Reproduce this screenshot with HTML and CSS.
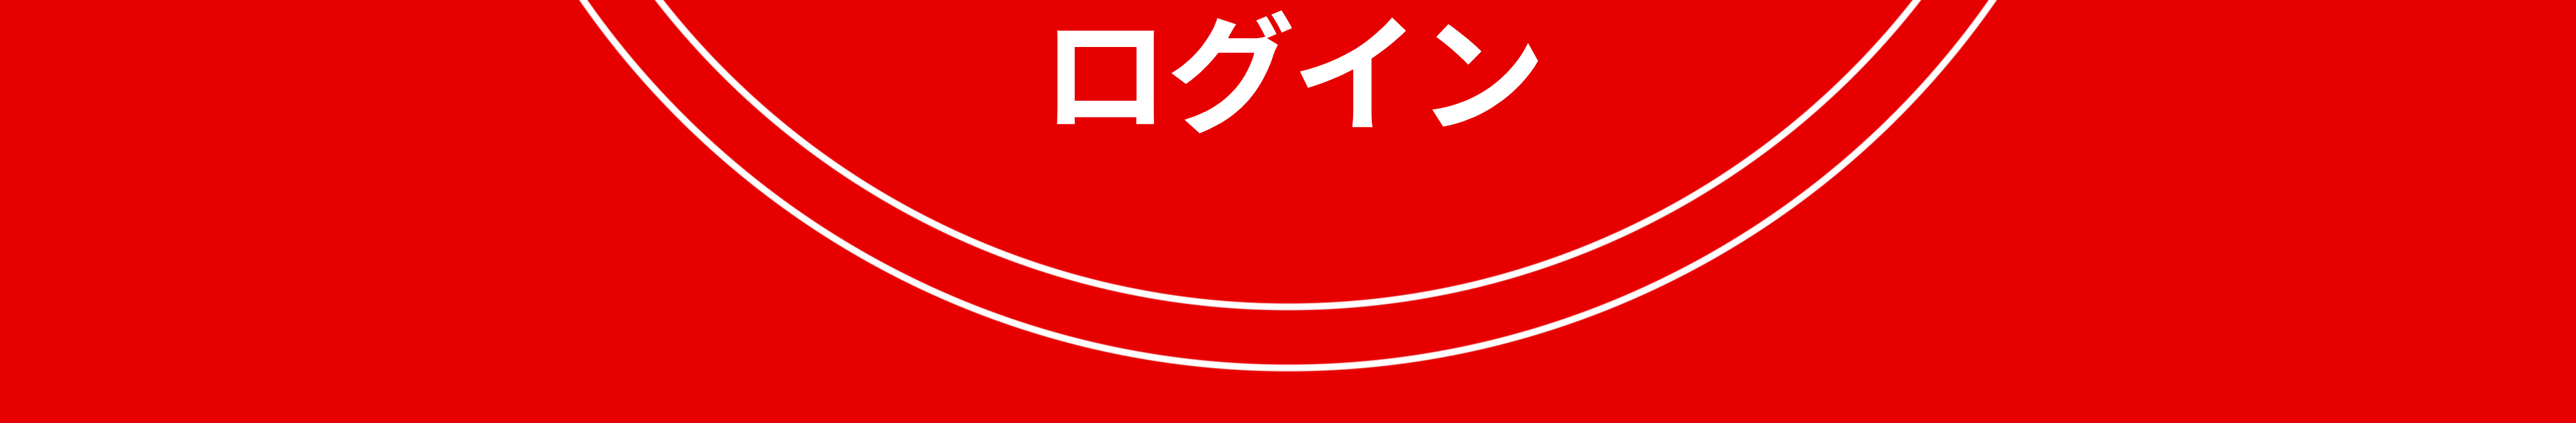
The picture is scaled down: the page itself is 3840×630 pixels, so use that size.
FILE: index.html
```html
<!DOCTYPE html>
<html lang="ja">
<head>
<meta charset="utf-8">
<title>ログイン</title>
<link rel="stylesheet" href="styles.css">
</head>
<body>
<main class="banner">
  <h1 class="label">ログイン</h1>
</main>
</body>
</html>
```
FILE: styles.css
```css
html, body {
  margin: 0;
  padding: 0;
  background: #e60000;
}

.banner {
  width: 100%;
  height: 630px;
  overflow: hidden;
  display: flex;
  flex-direction: column;
  align-items: center;
  background:
    radial-gradient(circle at 50% -733px,
      rgba(255,255,255,0) 1184px,
      #ffffff 1186px,
      #ffffff 1194px,
      rgba(255,255,255,0) 1196px,
      rgba(255,255,255,0) 1275px,
      #ffffff 1277px,
      #ffffff 1285px,
      rgba(255,255,255,0) 1287px),
    #e60000;
}

.label {
  margin: 0;
  padding: 2px 0 0 12px;
  font-family: "Noto Sans CJK JP", sans-serif;
  font-weight: 700;
  font-size: 191px;
  line-height: 1;
  letter-spacing: -4px;
  color: #ffffff;
}
```
